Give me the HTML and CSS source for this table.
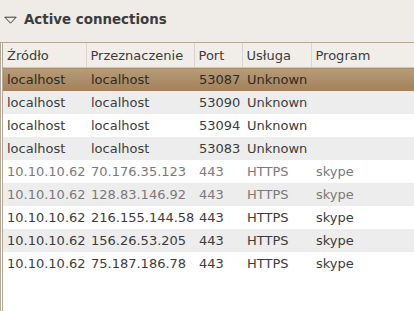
FILE: index.html
```html
<!DOCTYPE html>
<html>
<head>
<meta charset="utf-8">
<link rel="stylesheet" href="styles.css">
</head>
<body>
<div class="panel">
  <div class="expander">
    <svg class="arrow" width="13" height="8" viewBox="0 0 13 8"><path d="M0.8 1.2 L12.2 1.2 L6.5 7.2 Z" fill="none" stroke="#3c3c3c" stroke-width="1"/></svg>
    <span class="title">Active connections</span>
  </div>
  <div class="frame">
    <table class="conn">
      <colgroup>
        <col class="c1"><col class="c2"><col class="c3"><col class="c4"><col class="c5">
      </colgroup>
      <thead>
        <tr><th>Źródło</th><th class="sep">Przeznaczenie</th><th class="sep">Port</th><th class="sep">Usługa</th><th class="sep">Program</th></tr>
      </thead>
      <tbody>
        <tr class="sel"><td>localhost</td><td>localhost</td><td>53087</td><td>Unknown</td><td></td></tr>
        <tr class="odd"><td>localhost</td><td>localhost</td><td>53090</td><td>Unknown</td><td></td></tr>
        <tr><td>localhost</td><td>localhost</td><td>53094</td><td>Unknown</td><td></td></tr>
        <tr class="odd"><td>localhost</td><td>localhost</td><td>53083</td><td>Unknown</td><td></td></tr>
        <tr class="dim"><td>10.10.10.62</td><td>70.176.35.123</td><td>443</td><td>HTTPS</td><td>skype</td></tr>
        <tr class="odd dim"><td>10.10.10.62</td><td>128.83.146.92</td><td>443</td><td>HTTPS</td><td>skype</td></tr>
        <tr><td>10.10.10.62</td><td>216.155.144.58</td><td>443</td><td>HTTPS</td><td>skype</td></tr>
        <tr class="odd"><td>10.10.10.62</td><td>156.26.53.205</td><td>443</td><td>HTTPS</td><td>skype</td></tr>
        <tr><td>10.10.10.62</td><td>75.187.186.78</td><td>443</td><td>HTTPS</td><td>skype</td></tr>
      </tbody>
    </table>
  </div>
</div>
</body>
</html>
```
FILE: styles.css
```css
html, body {
  margin: 0;
  padding: 0;
  height: 100%;
  background: #efebe7;
  font-family: "DejaVu Sans", sans-serif;
  font-size: 13px;
  color: #3c3c3c;
  overflow: hidden;
}
.panel {
  display: flex;
  flex-direction: column;
  height: 311px;
}
.expander {
  height: 42px;
  display: flex;
  align-items: center;
  padding-left: 4px;
  gap: 7px;
  box-sizing: border-box;
  padding-bottom: 3px;
}
.arrow { display: block; }
.title {
  font-weight: bold;
  font-size: 13.4px;
  color: #3c3c3c;
}
.frame {
  flex: 1;
  background: #ffffff;
  border-left: 3px double #b5a898;
  border-top: 1px solid #b5a898;
}
.conn {
  width: 100%;
  table-layout: fixed;
  border-collapse: collapse;
  border-spacing: 0;
}
.c1 { width: 83px; }
.c2 { width: 108px; }
.c3 { width: 48px; }
.c4 { width: 69px; }
.conn th {
  height: 24px;
  text-align: left;
  font-weight: normal;
  padding: 0 0 0 4px;
  background: #f1eee9;
  border-bottom: 1px solid #cfc6ba;
  white-space: nowrap;
  overflow: hidden;
}
.conn th.sep {
  border-left: 1px solid #ddd5cb;
}
.conn td {
  height: 23px;
  padding: 0 0 0 5px;
  white-space: nowrap;
  overflow: hidden;
  color: #3c3c3c;
}
.conn td:first-child { padding-left: 4px; }
.conn tr.odd td { background: #ededed; }
.conn tr.dim td { color: #7a7a7a; }
.conn tr.sel td {
  background: linear-gradient(#b69c79, #a2805a);
  color: #2e2a26;
}
```
